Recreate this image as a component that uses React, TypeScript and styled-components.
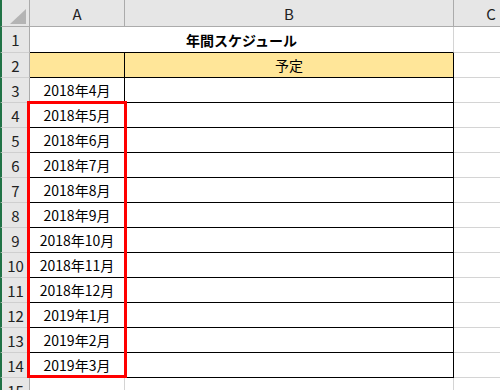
import React from 'react';
import styled, { createGlobalStyle } from 'styled-components';

const GlobalStyle = createGlobalStyle`
  html, body {
    margin: 0;
    padding: 0;
    background: #ffffff;
    overflow: hidden;
  }
`;

const GRID = '#d4d4d4';
const HEAD_LINE = '#ababab';
const INK = '#000000';

const Sheet = styled.div`
  position: relative;
  display: grid;
  grid-template-columns: 30px 95px 329px 74px;
  grid-template-rows: 27px 26px repeat(13, 25px) 25px;
  width: 528px;
  font-family: "Noto Sans CJK JP", "Noto Sans", sans-serif;
  color: #111;
`;

const Corner = styled.div`
  position: relative;
  box-sizing: border-box;
  background: #e6e6e6;
  border-left: 2px solid #217346;
  border-right: 1px solid ${HEAD_LINE};
  border-bottom: 1px solid ${HEAD_LINE};

  &::after {
    content: '';
    position: absolute;
    right: 3px;
    bottom: 2px;
    width: 0;
    height: 0;
    border-left: 16px solid transparent;
    border-bottom: 15px solid #b4b4b4;
  }
`;

const ColHead = styled.div<{ $last?: boolean }>`
  box-sizing: border-box;
  background: #e6e6e6;
  border-right: ${(p) => (p.$last ? 'none' : `1px solid ${HEAD_LINE}`)};
  border-bottom: 1px solid ${HEAD_LINE};
  display: flex;
  align-items: center;
  justify-content: center;
  font-size: 15px;
  color: #222;
  padding-top: 1px;
`;

const RowHead = styled.div<{ $first?: boolean }>`
  box-sizing: border-box;
  background: #e6e6e6;
  border-left: 2px solid #217346;
  border-right: 1px solid ${HEAD_LINE};
  border-bottom: 1px solid #cfcfcf;
  display: flex;
  align-items: center;
  justify-content: center;
  font-size: 15px;
  color: #222;
  padding-top: ${(p) => (p.$first ? '0' : '1px')};
`;

const Cell = styled.div<{
  $right?: string;
  $bottom?: string;
  $fill?: string;
  $bold?: boolean;
  $span?: number;
}>`
  box-sizing: border-box;
  grid-column: span ${(p) => p.$span ?? 1};
  background: ${(p) => p.$fill ?? '#ffffff'};
  border-right: 1px solid ${(p) => p.$right ?? GRID};
  border-bottom: 1px solid ${(p) => p.$bottom ?? GRID};
  display: flex;
  align-items: center;
  justify-content: center;
  font-size: 14px;
  font-weight: ${(p) => (p.$bold ? 700 : 400)};
  color: #000;
  white-space: nowrap;
`;

// red frame drawn over the month column
const Highlight = styled.div`
  position: absolute;
  left: 27px;
  top: 101px;
  width: 100px;
  height: 277px;
  box-sizing: border-box;
  border: 3px solid #ff0000;
  pointer-events: none;
`;

const months = [
  '2018年4月',
  '2018年5月',
  '2018年6月',
  '2018年7月',
  '2018年8月',
  '2018年9月',
  '2018年10月',
  '2018年11月',
  '2018年12月',
  '2019年1月',
  '2019年2月',
  '2019年3月',
];

const App: React.FC = () => {
  return (
    <>
      <GlobalStyle />
      <Sheet>
        <Corner />
        <ColHead>A</ColHead>
        <ColHead>B</ColHead>
        <ColHead $last>C</ColHead>

        <RowHead $first>1</RowHead>
        <Cell $span={2} $bottom={INK} $bold>
          年間スケジュール
        </Cell>
        <Cell $right="transparent" />

        <RowHead>2</RowHead>
        <Cell $right={INK} $bottom={INK} $fill="#ffe699" />
        <Cell $right={INK} $bottom={INK} $fill="#ffe699">
          予定
        </Cell>
        <Cell $right="transparent" />

        {months.map((m, i) => (
          <React.Fragment key={m}>
            <RowHead>{i + 3}</RowHead>
            <Cell $right={INK} $bottom={INK}>
              {m}
            </Cell>
            <Cell $right={INK} $bottom={INK} />
            <Cell $right="transparent" />
          </React.Fragment>
        ))}

        <RowHead>15</RowHead>
        <Cell />
        <Cell />
        <Cell $right="transparent" />

        <Highlight />
      </Sheet>
    </>
  );
};

export default App;
